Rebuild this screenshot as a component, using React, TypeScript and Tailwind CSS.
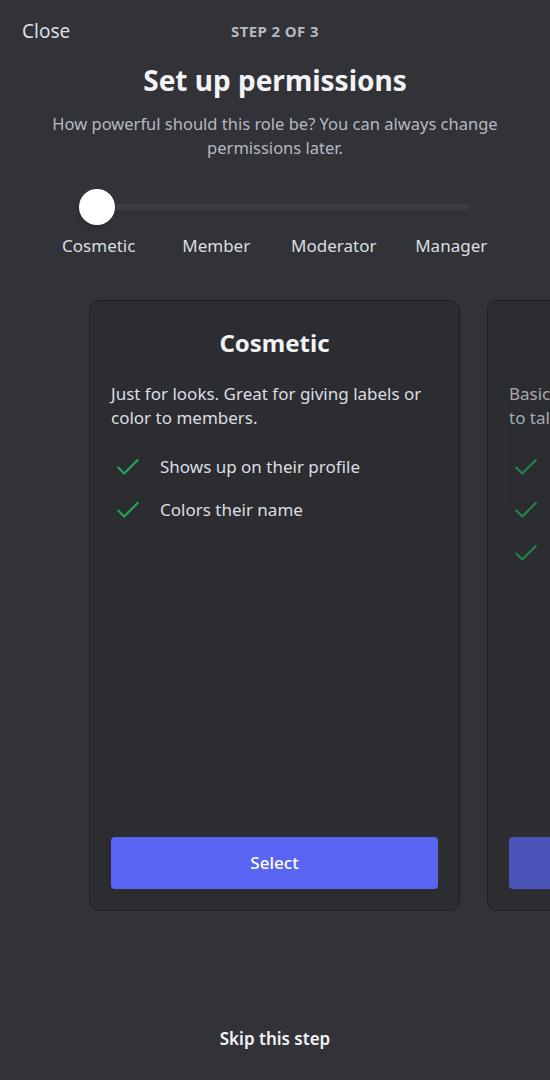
import React from 'react';

const font = { fontFamily: '"Noto Sans", "Open Sans", Arial, sans-serif' };

function Check() {
    return (
        <svg className="w-[26px] h-[26px] text-[#23a55a] shrink-0" viewBox="0 0 24 24" fill="none" stroke="currentColor">
            <path d="M3 12.5l5.5 5.5L21 5.5" strokeWidth={2} strokeLinecap="round" strokeLinejoin="round" />
        </svg>
    );
}

type Tier = {
    title: string;
    desc: React.ReactNode;
    perks: string[];
    dim?: boolean;
};

const tiers: Tier[] = [
    {
        title: 'Cosmetic',
        desc: (
            <>
                Just for looks. Great for giving labels or
                <br />
                color to members.
            </>
        ),
        perks: ['Shows up on their profile', 'Colors their name'],
    },
    {
        title: 'Member',
        desc: (
            <>
                Basic permissions for everyday members,
                <br />
                to talk and hang out.
            </>
        ),
        perks: ['Send messages', 'Join voice channels', 'Add reactions'],
        dim: true,
    },
];

function TierCard({ tier }: { tier: Tier }) {
    return (
        <div className="w-[371px] h-[611px] shrink-0 rounded-[10px] bg-[#2b2d31] border border-[#1e1f22] px-[21px] pt-[26px] pb-[21px] flex flex-col overflow-hidden">
            <div className={tier.dim ? 'opacity-70 flex flex-col flex-1' : 'flex flex-col flex-1'}>
                <h2 className="text-center text-[24px] leading-[32px] font-bold text-[#f2f3f5]">{tier.title}</h2>
                <p className="mt-[23px] text-[17px] leading-[24px] text-[#dbdee1] whitespace-nowrap">{tier.desc}</p>
                <ul className="mt-[24px] flex flex-col gap-[17px]">
                    {tier.perks.map((p) => (
                        <li key={p} className="flex items-center gap-[19px] pl-[4px] h-[26px]">
                            <Check />
                            <span className="text-[17px] leading-[24px] text-[#dbdee1]">{p}</span>
                        </li>
                    ))}
                </ul>
                <div className="flex-1" />
                <button className="h-[52px] w-full rounded-[4px] bg-[#5865f2] text-[17px] font-medium text-white">
                    Select
                </button>
            </div>
        </div>
    );
}

export default function App() {
    const stops = ['Cosmetic', 'Member', 'Moderator', 'Manager'];

    return (
        <div className="w-[550px] h-[1080px] bg-[#313338] text-white overflow-hidden flex flex-col" style={font}>
            {/* header */}
            <div className="relative h-[62px] flex items-center justify-center">
                <button className="absolute left-[22px] top-[18px] text-[19px] leading-[26px] text-[#dbdee1]">Close</button>
                <span className="text-[15px] font-bold tracking-[0.4px] text-[#b5bac1]">STEP 2 OF 3</span>
            </div>

            <h1 className="text-center text-[28px] leading-[36px] font-bold text-[#f2f3f5]">Set up permissions</h1>
            <p className="mt-[14px] mx-auto w-[480px] text-center text-[16.5px] leading-[24px] text-[#b5bac1]">
                How powerful should this role be? You can always change permissions later.
            </p>

            {/* slider */}
            <div className="mt-[29px] mx-auto w-[470px]">
                <div className="relative h-[36px]">
                    <div className="absolute left-[57px] right-[41px] top-[15px] h-[6px] rounded-full bg-[#3b3d43]" />
                    <div className="absolute left-[39px] top-0 w-[36px] h-[36px] rounded-full bg-white shadow-md" />
                </div>
                <div className="mt-[9px] grid grid-cols-4">
                    {stops.map((s) => (
                        <span key={s} className="text-center text-[17px] leading-[24px] text-[#dbdee1]">
                            {s}
                        </span>
                    ))}
                </div>
            </div>

            {/* cards */}
            <div className="mt-[42px] pl-[89px] flex gap-[27px] overflow-hidden">
                {tiers.map((t) => (
                    <TierCard key={t.title} tier={t} />
                ))}
            </div>

            <div className="flex-1 flex items-center justify-center">
                <button className="mt-[86px] text-[17px] font-semibold text-[#f2f3f5]">Skip this step</button>
            </div>
        </div>
    );
}
